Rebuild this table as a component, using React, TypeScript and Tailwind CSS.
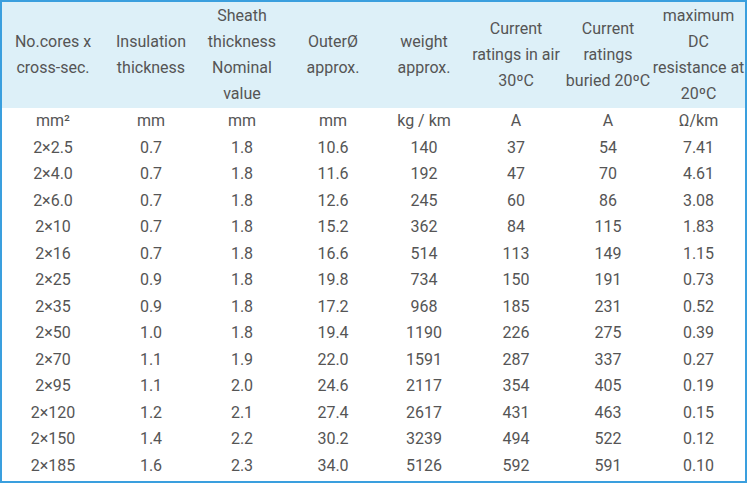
import React from 'react';

const headers: string[][] = [
  ['No.cores x', 'cross-sec.'],
  ['Insulation', 'thickness'],
  ['Sheath', 'thickness', 'Nominal', 'value'],
  ['Outer\u00d8', 'approx.'],
  ['weight', 'approx.'],
  ['Current', 'ratings in air', '30\u00baC'],
  ['Current', 'ratings', 'buried 20\u00baC'],
  ['maximum', 'DC', 'resistance at', '20\u00baC'],
];

const units = ['mm\u00b2', 'mm', 'mm', 'mm', 'kg / km', 'A', 'A', '\u03a9/km'];

const rows: string[][] = [
  ['2\u00d72.5', '0.7', '1.8', '10.6', '140', '37', '54', '7.41'],
  ['2\u00d74.0', '0.7', '1.8', '11.6', '192', '47', '70', '4.61'],
  ['2\u00d76.0', '0.7', '1.8', '12.6', '245', '60', '86', '3.08'],
  ['2\u00d710', '0.7', '1.8', '15.2', '362', '84', '115', '1.83'],
  ['2\u00d716', '0.7', '1.8', '16.6', '514', '113', '149', '1.15'],
  ['2\u00d725', '0.9', '1.8', '19.8', '734', '150', '191', '0.73'],
  ['2\u00d735', '0.9', '1.8', '17.2', '968', '185', '231', '0.52'],
  ['2\u00d750', '1.0', '1.8', '19.4', '1190', '226', '275', '0.39'],
  ['2\u00d770', '1.1', '1.9', '22.0', '1591', '287', '337', '0.27'],
  ['2\u00d795', '1.1', '2.0', '24.6', '2117', '354', '405', '0.19'],
  ['2\u00d7120', '1.2', '2.1', '27.4', '2617', '431', '463', '0.15'],
  ['2\u00d7150', '1.4', '2.2', '30.2', '3239', '494', '522', '0.12'],
  ['2\u00d7185', '1.6', '2.3', '34.0', '5126', '592', '591', '0.10'],
];

// column widths picked so the centres sit where the screenshot has them
const widths = ['w-[102px]', 'w-[94px]', 'w-[88px]', 'w-[94px]', 'w-[88px]', 'w-[96px]', 'w-[88px]', 'w-[93px]'];

export default function App() {
  return (
    <div className="w-[750px] h-[484px] bg-white">
      <div
        className="w-[747px] h-[483px] border-2 border-[#3a9fde] bg-white text-[#555555] text-[16px] overflow-hidden"
        style={{ fontFamily: 'Roboto, "Liberation Sans", sans-serif' }}
      >
        <table className="table-fixed border-collapse w-[743px]">
          <colgroup>
            {widths.map((w, i) => (
              <col key={i} className={w} />
            ))}
          </colgroup>
          <thead>
            <tr className="bg-[#ddf0f8] h-[106px]">
              {headers.map((lines, i) => (
                <th key={i} className="font-normal text-center align-middle leading-[26px] p-0 whitespace-nowrap">
                  {lines.map((l, j) => (
                    <div key={j}>{l}</div>
                  ))}
                </th>
              ))}
            </tr>
          </thead>
          <tbody>
            <tr className="h-[26.5px]">
              {units.map((u, i) => (
                <td key={i} className="text-center p-0 leading-[26px]">{u}</td>
              ))}
            </tr>
            {rows.map((r, i) => (
              <tr key={i} className="h-[26.5px]">
                {r.map((c, j) => (
                  <td key={j} className="text-center p-0 leading-[26px]">{c}</td>
                ))}
              </tr>
            ))}
          </tbody>
        </table>
      </div>
    </div>
  );
}
